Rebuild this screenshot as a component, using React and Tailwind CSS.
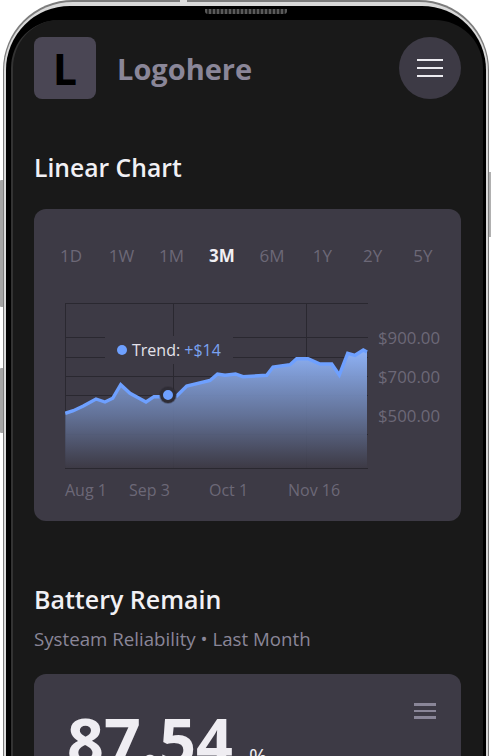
import React from "react";

const LINE = [[65.3,413.3],[73.3,410.7],[83.3,406],[96,399],[105,402],[112.7,398.3],[120.7,384.7],[130,393.3],[146,402],[154,396.7],[160,396.7],[168,395],[176.7,396],[186.7,386],[210,380.5],[217.5,374],[225,375.3],[235.5,374],[243,376.7],[266.7,375.3],[273,367],[290,364.7],[296.7,358.7],[308,358.7],[320,364],[331.7,364],[339.3,375],[347.7,353.3],[355,355.3],[363.3,350],[367,352]];
const OX = 65, OY = 303;
const pts = LINE.map(([x, y]) => `${(x - OX).toFixed(1)},${(y - OY).toFixed(1)}`).join(" ");
const TABS = ["1D", "1W", "1M", "3M", "6M", "1Y", "2Y", "5Y"];

function Chart() {
  return (
    <svg width="303" height="166" viewBox="0 0 303 166" className="block shrink-0">
      <defs>
        <linearGradient id="area" gradientUnits="userSpaceOnUse" x1="0" y1="47" x2="0" y2="165">
          <stop offset="0" stopColor="#8fb3f7" stopOpacity="1" />
          <stop offset="0.55" stopColor="#66779f" stopOpacity="0.92" />
          <stop offset="1" stopColor="#3d3a45" stopOpacity="0.9" />
        </linearGradient>
      </defs>
      {[0.5, 34.5, 54.5, 73.5, 92.5, 131.5, 165.5].map((y) => (
        <line key={y} x1="0" x2="303" y1={y} y2={y} stroke="#2a2830" strokeWidth="1" />
      ))}
      {[0.5, 108.5, 241.5].map((x) => (
        <line key={x} x1={x} x2={x} y1="0" y2="165" stroke="#2a2830" strokeWidth="1" />
      ))}
      <polygon points={`0,165 ${pts} 302,165`} fill="url(#area)" />
      <polyline points={pts} fill="none" stroke="#6ea0ff" strokeWidth="3.4" strokeLinejoin="miter" />
      <circle cx="103" cy="92" r="9" fill="#2b2931" fillOpacity="0.35" />
      <circle cx="103" cy="92" r="6.5" fill="#6ea0ff" stroke="#2f2d36" strokeWidth="3" />
    </svg>
  );
}

export default function App() {
  return (
    <div className="relative w-[492px] h-[756px] overflow-hidden bg-white font-['Open_Sans',sans-serif]">
      <span className="absolute left-[0px] top-[180px] w-[5px] h-[127px] bg-[#a4a4a4] rounded-l-[1px]" />
      <span className="absolute left-[0px] top-[368px] w-[5px] h-[65px] bg-[#a4a4a4] rounded-l-[1px]" />
      <span className="absolute left-[487px] top-[172px] w-[4px] h-[65px] bg-[#b0b0b0]" />
      <span className="absolute left-[180px] top-0 w-[7px] h-[4px] bg-[#dcdcdc] z-10" />
      <div className="relative ml-[3px] w-[486px] h-[900px] rounded-[70px] bg-[#7c7c7c] pt-[2px] px-[1px]">
        <div className="h-full rounded-[69px] bg-[#d9d9d9] pt-[4px] px-[2px]">
          <div className="h-full rounded-[64px] bg-black pt-[14px] pl-[5px] pr-[3px]">
            <div className="relative h-full rounded-[48px] bg-[#191919] border-l-2 border-[#333] pl-[21px] pr-[22px] pt-[17px]">
              <header className="flex items-center justify-between">
                <div className="flex items-center gap-[21px]">
                  <div className="w-[62px] h-[62px] rounded-[8px] bg-[#4a4654] flex items-center justify-center text-black text-[43px] font-bold leading-none">L</div>
                  <div className="text-[29px] leading-none font-bold text-[#8a8698]">Logohere</div>
                </div>
                <div className="w-[62px] h-[62px] rounded-full bg-[#3d3a45] flex flex-col items-center justify-center gap-[5.5px]">
                  <span className="block w-[26px] h-[2.5px] bg-[#ecebf0]" />
                  <span className="block w-[26px] h-[2.5px] bg-[#ecebf0]" />
                  <span className="block w-[26px] h-[2.5px] bg-[#ecebf0]" />
                </div>
              </header>

              <h2 className="mt-[52px] text-[24.7px] leading-[34px] font-semibold text-[#f1f0f4]">Linear Chart</h2>

              <section className="mt-[24px] h-[312px] rounded-[12px] bg-[#3d3a45] pl-[12px] pr-[13px] pt-[34px]">
                <div className="grid grid-cols-8 text-[17px] leading-[26px] text-[#6c6877] text-center">
                  {TABS.map((t) => (
                    <span key={t} className={t === "3M" ? "font-bold text-[#f1f0f4]" : ""}>{t}</span>
                  ))}
                </div>
                <div className="relative mt-[34px] ml-[19px] flex gap-[10px]">
                  <Chart />
                  <div className="flex flex-col gap-[13px] pt-[22px] text-[16.8px] leading-[26px] text-[#6c6877]">
                    <span>$900.00</span>
                    <span>$700.00</span>
                    <span>$500.00</span>
                  </div>
                  <div className="absolute left-[40px] top-[33px] h-[28px] w-[128px] bg-[#3d3a45] flex items-center gap-[5px] pl-[12px] text-[16px] text-[#e4e2ea]">
                    <span className="w-[10px] h-[10px] rounded-full bg-[#6ea0ff] shrink-0" />
                    <span className="whitespace-nowrap">Trend: <span className="text-[#7aa2f0]">+$14</span></span>
                  </div>
                </div>
                <div className="ml-[19px] mt-[9px] flex text-[16px] leading-[24px] text-[#6c6877]">
                  <span className="w-[64px]">Aug 1</span>
                  <span className="w-[80px]">Sep 3</span>
                  <span className="w-[79px]">Oct 1</span>
                  <span>Nov 16</span>
                </div>
              </section>

              <h2 className="mt-[61px] text-[25px] leading-[34px] font-semibold text-[#f1f0f4]">Battery Remain</h2>
              <p className="mt-[10px] text-[18.7px] leading-[26px] text-[#8a8698]">Systeam Reliability • Last Month</p>

              <section className="relative mt-[22px] h-[200px] rounded-[12px] bg-[#3d3a45] pl-[33px] pt-[26px]">
                <div className="flex items-baseline gap-[16px] text-[#efedf2]">
                  <span className="text-[64.5px] leading-[80px] font-bold">87.54</span>
                  <span className="text-[22px]">%</span>
                </div>
                <div className="absolute right-[25px] top-[29px] flex flex-col gap-[4px]">
                  <span className="block w-[22px] h-[2.5px] bg-[#8a8698]" />
                  <span className="block w-[22px] h-[2.5px] bg-[#8a8698]" />
                  <span className="block w-[22px] h-[2.5px] bg-[#8a8698]" />
                </div>
              </section>
            </div>
          </div>
        </div>
        <span className="absolute left-[202px] top-[9px] w-[82px] h-[5px] rounded-b-[3px] bg-[repeating-linear-gradient(90deg,#5a5a5a_0_2px,#262626_2px_4px)]" />
      </div>
    </div>
  );
}
